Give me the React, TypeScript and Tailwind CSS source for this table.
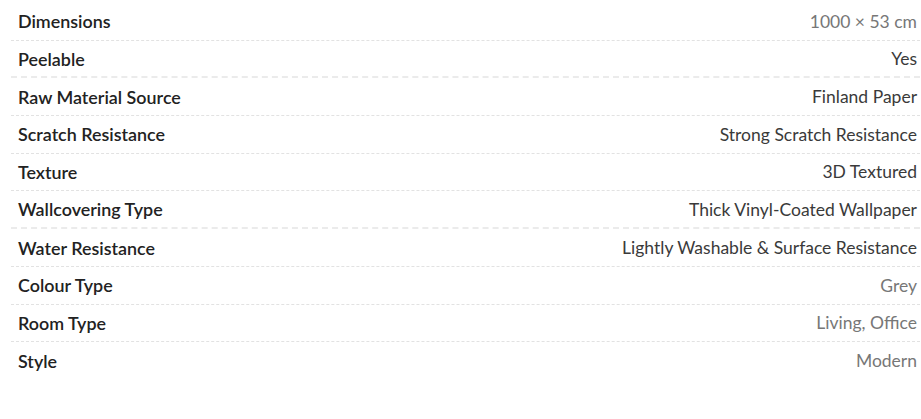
import React from "react";

const rows: { label: string; value: string; muted: boolean; thick?: boolean }[] = [
  { label: "Dimensions", value: "1000 × 53 cm", muted: true },
  { label: "Peelable", value: "Yes", muted: false, thick: true },
  { label: "Raw Material Source", value: "Finland Paper", muted: false },
  { label: "Scratch Resistance", value: "Strong Scratch Resistance", muted: false },
  { label: "Texture", value: "3D Textured", muted: false },
  { label: "Wallcovering Type", value: "Thick Vinyl-Coated Wallpaper", muted: false, thick: true },
  { label: "Water Resistance", value: "Lightly Washable & Surface Resistance", muted: false },
  { label: "Colour Type", value: "Grey", muted: true },
  { label: "Room Type", value: "Living, Office", muted: true },
  { label: "Style", value: "Modern", muted: true },
];

export default function App() {
  return (
    <div
      className="w-[921px] h-[419px] bg-white pt-[3px]"
      style={{ fontFamily: "Lato, 'Open Sans', sans-serif" }}
    >
      <div className="ml-[11px] w-[909px]">
        {rows.map((r, i) => (
          <div
            key={r.label}
            className={
              i === rows.length - 1
                ? "flex h-[37.7px] items-center justify-between pl-[7px] pr-[3px] pt-[1px]"
                : r.thick
                ? "flex h-[37.7px] items-center justify-between border-b-2 border-dashed border-[#ebebeb] pl-[7px] pr-[3px] pt-[1px]"
                : "flex h-[37.7px] items-center justify-between border-b border-dashed border-[#e2e2e2] pl-[7px] pr-[3px] pt-[1px]"
            }
          >
            <span className="text-[17.9px] font-semibold text-[#222222]">{r.label}</span>
            <span
              className={
                r.muted
                  ? "text-[17.5px] text-[#777777]"
                  : "text-[17.5px] text-[#3a3a3a]"
              }
            >
              {r.value}
            </span>
          </div>
        ))}
      </div>
    </div>
  );
}
